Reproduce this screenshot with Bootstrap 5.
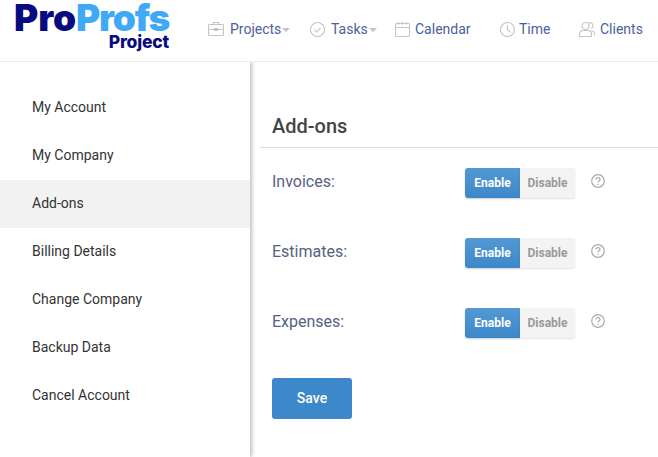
<!DOCTYPE html>
<html lang="en">
<head>
  <meta charset="UTF-8" />
  <meta name="viewport" content="width=device-width, initial-scale=1.0" />
  <title>Add-ons</title>
  <link href="https://cdn.jsdelivr.net/npm/bootstrap@5.3.0/dist/css/bootstrap.min.css" rel="stylesheet" crossorigin="anonymous" />
  <style>
    html, body { height: 100%; }
    body { font-family: Roboto, "Liberation Sans", sans-serif; color: #444; overflow: hidden; background: #fff; }
    .top-bar { height: 62px; border-bottom: 1px solid #ebebeb; padding-left: 15px; }
    .brand-box { width: 157px; height: 61px; flex-shrink: 0; }
    .brand-main { font-family: Inter, Roboto, sans-serif; font-weight: 900; font-size: 37px; line-height: 30px; padding-top: 3px; height: 33px; white-space: nowrap; margin-left: -1px; }
    .brand-pro { color: #0a0a80; letter-spacing: -.1px; }
    .brand-profs { color: #3fa9f5; letter-spacing: -1.2px; }
    .brand-sub { font-family: Inter, Roboto, sans-serif; font-weight: 800; font-size: 17.5px; line-height: 17px; color: #0a0a80; text-align: right; letter-spacing: -.2px; padding-right: 3px; }
    .top-links { margin-left: 36px; height: 58px; }
    .top-link { color: #4a5f9c; font-size: 14px; text-decoration: none; white-space: nowrap; }
    .top-link svg { stroke: #c4c4c4; fill: none; stroke-width: 1.1; margin-right: 6px; flex-shrink: 0; }
    .top-link svg.icon-tight { margin-right: 5px; }
    .top-link svg.icon-tighter { margin-right: 4px; }
    .drop-arrow { width: 0; height: 0; border-left: 4px solid transparent; border-right: 4px solid transparent; border-top: 4px solid #c4c4c4; margin-left: 1px; margin-top: 2px; }
    .page-body { height: calc(100vh - 62px); }
    .side-panel { width: 250px; flex-shrink: 0; padding-top: 22px; box-shadow: 2px 0 4px rgba(0,0,0,.25); clip-path: inset(0 -8px 0 0); }
    .side-link { display: block; height: 48px; line-height: 46px; padding-left: 32px; font-size: 14px; color: #333; text-decoration: none; }
    .side-link.is-current { background: #f2f2f2; }
    .main-panel { flex-grow: 1; padding: 43px 0 0 10px; }
    .main-title { font-size: 20px; font-weight: 500; color: #444; margin: -1px 0 0; padding: 9px 0 8px 12px; line-height: 27px; border-bottom: 1px solid #ddd; height: 44px; }
    .addon-list { padding-top: 20px; }
    .addon-row { height: 30px; margin-bottom: 40px; padding-left: 12px; }
    .addon-name { width: 193px; font-size: 16px; color: #55617f; margin-top: -2px; }
    .switch-group { width: 110px; height: 30px; }
    .switch-on, .switch-off { width: 55px; height: 30px; padding: 0; border: 0; font-size: 12px; font-weight: 700; }
    .switch-on { background: linear-gradient(#5298d3, #3d88ca); color: #fff; border-radius: 3px 0 0 3px; box-shadow: 0 1px 2px rgba(0,0,0,.2); }
    .switch-off { background: #f3f3f3; color: #999; border-radius: 0 3px 3px 0; box-shadow: 0 1px 2px rgba(0,0,0,.12); }
    .help-mark { margin-left: 16px; margin-top: -5px; }
    .save-btn { width: 80px; height: 41px; margin-left: 12px; background: #3d88ca; border: 0; border-radius: 3px; color: #fff; font-size: 14px; font-weight: 500; }
  </style>
</head>
<body>
  <header class="top-bar d-flex align-items-start">
    <div class="brand-box">
      <div class="brand-main"><span class="brand-pro">Pro</span><span class="brand-profs">Profs</span></div>
      <div class="brand-sub">Project</div>
    </div>
    <nav class="top-links d-flex align-items-center">
      <a class="top-link d-flex align-items-center" href="#" style="width:102px">
        <svg width="16" height="16" viewBox="0 0 16 16"><rect x=".5" y="3.500" width="15" height="11" rx="1"/><path d="M5.500 3.500v-2h5v2M.5 8.500h15M6.500 7.500h3v2h-3z"/></svg>Projects<span class="drop-arrow"></span>
      </a>
      <a class="top-link d-flex align-items-center" href="#" style="width:85px">
        <svg width="15" height="15" viewBox="0 0 15 15"><circle cx="7.500" cy="7.500" r="7"/><path d="M4.500 7.800l2.200 2.200 3.800-4.200"/></svg>Tasks<span class="drop-arrow"></span>
      </a>
      <a class="top-link d-flex align-items-center" href="#" style="width:105px">
        <svg class="icon-tight" width="15" height="16" viewBox="0 0 15 16"><rect x=".5" y="2.500" width="14" height="13" rx="1"/><path d="M.5 6.500h14M3.500 .8v3M7.500 .8v3M11.500 .8v3"/></svg>Calendar
      </a>
      <a class="top-link d-flex align-items-center" href="#" style="width:79px">
        <svg class="icon-tighter" width="15" height="15" viewBox="0 0 15 15"><circle cx="7.500" cy="7.500" r="7"/><path d="M7.500 3v4.500l3 3"/></svg>Time
      </a>
      <a class="top-link d-flex align-items-center" href="#">
        <svg class="icon-tight" width="16" height="16" viewBox="0 0 16 16"><circle cx="6.500" cy="5" r="3.500"/><path d="M.5 15.500v-2.500c0-2 2-3.500 3.500-3.500h5c1.500 0 3.500 1.500 3.500 3.500v2.500zM10 1.800c2.500-.6 4 1 4 3 0 1.200-.7 2.300-1.700 2.800M12 9.500c2 .3 3.500 1.700 3.500 3.500v1.500"/></svg>Clients
      </a>
    </nav>
  </header>
  <div class="page-body d-flex">
    <aside class="side-panel">
      <a class="side-link" href="#">My Account</a>
      <a class="side-link" href="#">My Company</a>
      <a class="side-link is-current" href="#">Add-ons</a>
      <a class="side-link" href="#">Billing Details</a>
      <a class="side-link" href="#">Change Company</a>
      <a class="side-link" href="#">Backup Data</a>
      <a class="side-link" href="#">Cancel Account</a>
    </aside>
    <main class="main-panel">
      <h1 class="main-title">Add-ons</h1>
      <div class="addon-list">
        <div class="addon-row d-flex align-items-center">
          <div class="addon-name">Invoices:</div>
          <div class="switch-group d-flex"><button class="switch-on">Enable</button><button class="switch-off">Disable</button></div>
          <svg class="help-mark" width="14" height="14" viewBox="0 0 14 14" fill="none" stroke="#aaa" stroke-width="1.200"><circle cx="7" cy="7" r="6.300"/><path d="M5 5.500c0-2.600 4-2.600 4 0 0 1.400-2 1.500-2 3"/><path d="M7 9.700v1.200"/></svg>
        </div>
        <div class="addon-row d-flex align-items-center">
          <div class="addon-name">Estimates:</div>
          <div class="switch-group d-flex"><button class="switch-on">Enable</button><button class="switch-off">Disable</button></div>
          <svg class="help-mark" width="14" height="14" viewBox="0 0 14 14" fill="none" stroke="#aaa" stroke-width="1.200"><circle cx="7" cy="7" r="6.300"/><path d="M5 5.500c0-2.600 4-2.600 4 0 0 1.400-2 1.500-2 3"/><path d="M7 9.700v1.200"/></svg>
        </div>
        <div class="addon-row d-flex align-items-center">
          <div class="addon-name">Expenses:</div>
          <div class="switch-group d-flex"><button class="switch-on">Enable</button><button class="switch-off">Disable</button></div>
          <svg class="help-mark" width="14" height="14" viewBox="0 0 14 14" fill="none" stroke="#aaa" stroke-width="1.200"><circle cx="7" cy="7" r="6.300"/><path d="M5 5.500c0-2.600 4-2.600 4 0 0 1.400-2 1.500-2 3"/><path d="M7 9.700v1.200"/></svg>
        </div>
        <button class="save-btn">Save</button>
      </div>
    </main>
  </div>
  <script src="https://cdn.jsdelivr.net/npm/bootstrap@5.3.0/dist/js/bootstrap.bundle.min.js" crossorigin="anonymous"></script>
</body>
</html>
